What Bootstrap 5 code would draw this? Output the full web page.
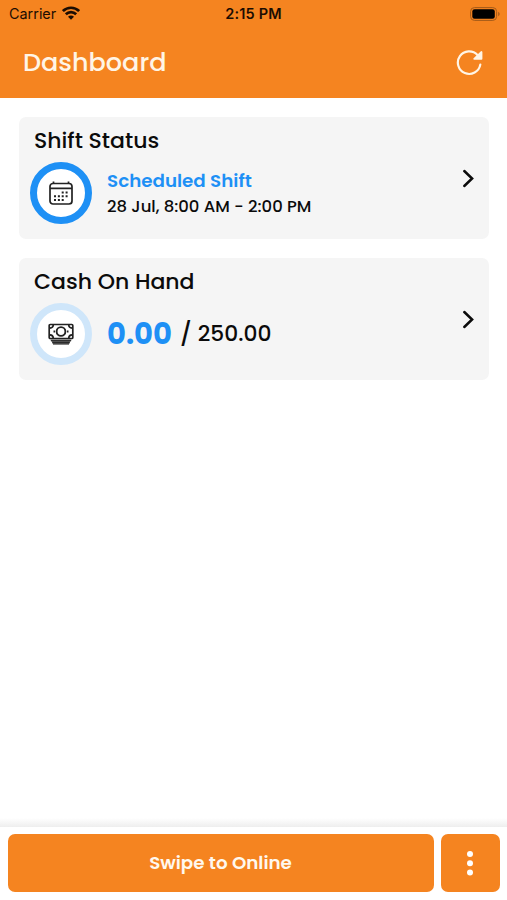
<!DOCTYPE html>
<html lang="en">
<head>
<meta charset="utf-8">
<meta name="viewport" content="width=device-width, initial-scale=1">
<title>Dashboard</title>
<link href="https://cdn.jsdelivr.net/npm/bootstrap@5.3.0/dist/css/bootstrap.min.css" rel="stylesheet">
<style>
body{font-family:Poppins,Inter,"Liberation Sans",sans-serif;color:#0b0b0b;font-weight:500}
.orange{background:#f58420}
.topbar{height:98.400px}
.status{height:27px;padding:0 6px 0 9px;font-family:Inter,"Liberation Sans",sans-serif;font-size:14.400px;font-weight:400;color:#1c0d02;display:grid;grid-template-columns:1fr auto 1fr}
.status .clock{font-size:14.500px;font-weight:600;letter-spacing:.15px;margin-right:3px}
.wifi{margin-left:6px;margin-top:-1px}
.titlebar{height:71px;padding:0 24px 0 23px}
.page-title{font-size:25.5px;line-height:38px;margin-top:-1px;color:#fff5e6}
.content-area{padding:18.600px 18px 0 19px}
.tile{height:122px;border-radius:7px;background:#f5f5f5;border:0;margin-bottom:19px}
.tile-title{font-size:22px;line-height:32px;padding:8.500px 0 0 15px}
.tile-row{padding:5px 14px 0 11px}
.ring{width:62px;height:62px;border:7.5px solid #1e90f5;background:#fff;flex:none}
.ring-soft{border-color:#cfe6fa}
.info{margin-left:15px}
.blue{color:#1e90f5}
.state{font-size:18.300px;line-height:26px;font-weight:600;padding-top:1px}
.when{font-size:16.5px;line-height:26px}
.amount{font-size:29px;line-height:40px;font-weight:700}
.slash{font-size:23px;line-height:40px;margin:0 6px 0 8px}
.total{font-size:21.800px;line-height:40px}
.chev{margin-top:-29px}
.footer-shade{height:9px;background:linear-gradient(#fff,#eee)}
.footer-bar{height:73px;padding:7px 7px 8px 8px;gap:7px;background:#fff}
.footer-bar .btn{border:0;border-radius:7px;color:#fff8ee;height:58px}
.footer-bar .swipe{font-size:18.300px;font-weight:600;padding:5px 13px 6px 12px}
.footer-bar .more{width:59px;padding:0 1px 0 0}
svg{display:block}
</style>
</head>
<body class="bg-white">
<div class="d-flex flex-column vh-100 overflow-hidden">
<header class="topbar orange flex-shrink-0">
<div class="status align-items-center">
<div class="d-flex align-items-center"><span>Carrier</span>
<svg class="wifi" width="18" height="14" viewBox="0 0 18 14" fill="none" stroke="#1c0d02" stroke-width="2.700"><path d="M.9 5.1C5.5.6 12.5.6 17.1 5.1M3.8 8.2c3-2.9 7.400-2.900 10.400 0"/><path d="M9 13.800 6 10.800c1.700-1.600 4.300-1.600 6 0z" fill="#1c0d02" stroke="none"/></svg></div>
<span class="clock">2:15 PM</span>
<svg class="ms-auto" width="31" height="14" viewBox="0 0 31 14"><rect x=".6" y=".6" width="26" height="12.800" rx="3.800" fill="none" stroke="#a35a19"/><rect x="2.300" y="2.300" width="22.500" height="9.400" rx="2.300" fill="#000"/><path d="M28.200 4.800c2 .8 2 3.600 0 4.400z" fill="#a35a19"/></svg>
</div>
<div class="titlebar d-flex align-items-center justify-content-between">
<h1 class="page-title mb-0">Dashboard</h1>
<svg width="27" height="27" viewBox="0 0 27 27" fill="none" stroke="#fff5e6" stroke-width="2.200" stroke-linecap="round"><path d="M24.300 15.600A11.300 11.300 0 1 1 21.500 6"/><path d="M25.500 3v6.800h-7.300z" fill="#fff5e6" stroke-width="1.800" stroke-linejoin="round"/></svg>
</div>
</header>
<main class="content-area flex-grow-1">
<section class="card tile">
<h2 class="tile-title mb-0">Shift Status</h2>
<div class="tile-row d-flex align-items-center">
<div class="ring rounded-circle d-flex align-items-center justify-content-center">
<svg width="24" height="24" viewBox="0 0 24 24" fill="none" stroke="#222" stroke-width="1.700"><rect x="1" y="2.500" width="22" height="20.500" rx="3"/><path d="M1 7.400h22M4.500.6v2M19.500.6v2"/><path d="M12.700 11.500h2m1.900 0h2M5 15.200h2m1.900 0h2m1.800 0h2m1.900 0h2M5 18.900h2m1.900 0h2m1.800 0h2" stroke-width="2"/></svg>
</div>
<div class="info">
<div class="state blue">Scheduled Shift</div>
<div class="when">28 Jul, 8:00 AM - 2:00 PM</div>
</div>
<svg class="ms-auto chev" width="13" height="19" viewBox="0 0 13 19" fill="none" stroke="#0b0b0b" stroke-width="2.500" stroke-linecap="round"><path d="m2.300 2 7.800 7.500-7.800 7.500"/></svg>
</div>
</section>
<section class="card tile">
<h2 class="tile-title mb-0">Cash On Hand</h2>
<div class="tile-row d-flex align-items-center">
<div class="ring ring-soft rounded-circle d-flex align-items-center justify-content-center">
<svg width="26" height="22" viewBox="0 0 26 22" fill="none" stroke="#222" stroke-width="1.700"><rect x="1.200" y="1.500" width="23.600" height="14" rx="1"/><circle cx="13" cy="8.500" r="4.400" stroke-width="1.900"/><path d="M2 5.200Q5 5 5.300 2M24 5.200Q21 5 20.700 2M2 11.800q3 .2 3.300 3.200M24 11.800q-3 .2-3.300 3.200"/><path d="M5.500 8.500h1.500M19 8.500h1.500" stroke-width="2"/><path d="M2.500 16.500h21l-.5 2h-1l-.7 2.500H4.700L4 18.500H3z" fill="#555" stroke="none"/><path d="M3 17.600h20M4.200 19.500h17.600M5 21.200h16" stroke-width=".8"/></svg>
</div>
<div class="info d-flex align-items-center">
<span class="amount blue">0.00</span><span class="slash">/</span><span class="total">250.00</span>
</div>
<svg class="ms-auto chev" width="13" height="19" viewBox="0 0 13 19" fill="none" stroke="#0b0b0b" stroke-width="2.500" stroke-linecap="round"><path d="m2.300 2 7.800 7.500-7.800 7.500"/></svg>
</div>
</section>
</main>
<div class="footer-shade flex-shrink-0"></div>
<footer class="footer-bar d-flex flex-shrink-0">
<button class="btn orange swipe flex-grow-1" type="button">Swipe to Online</button>
<button class="btn orange more d-flex align-items-center justify-content-center" type="button" aria-label="More"><svg width="8" height="26" viewBox="0 0 8 26" fill="#fff"><circle cx="4" cy="4" r="3"/><circle cx="4" cy="13.200" r="3"/><circle cx="4" cy="22.400" r="3"/></svg></button>
</footer>
</div>
<script src="https://cdn.jsdelivr.net/npm/bootstrap@5.3.0/dist/js/bootstrap.bundle.min.js"></script>
</body>
</html>
